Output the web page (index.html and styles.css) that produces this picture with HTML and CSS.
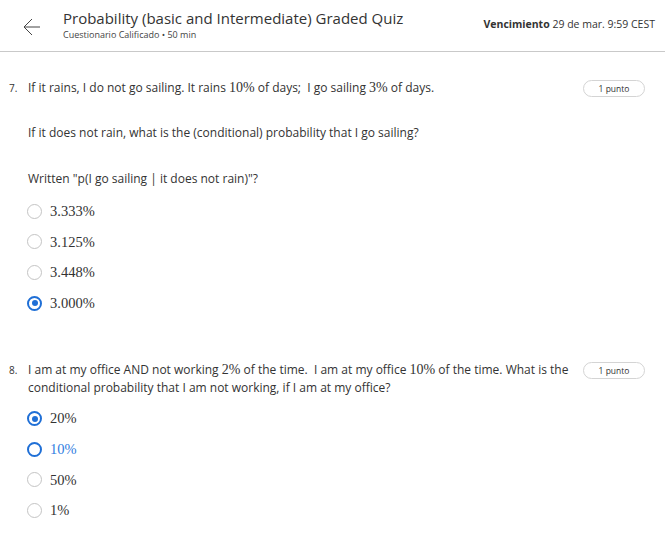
FILE: index.html
```html
<!DOCTYPE html>
<html>
<head>
<meta charset="utf-8">
<link rel="stylesheet" href="styles.css">
</head>
<body>
<header class="top">
  <div class="back">
    <svg width="18" height="18" viewBox="0 0 18 18"><path d="M17 9H1M9 1L1 9l8 8" fill="none" stroke="#444" stroke-width="1"/></svg>
  </div>
  <div class="titles">
    <div class="title">Probability (basic and Intermediate) Graded Quiz</div>
    <div class="sub">Cuestionario Calificado • 50 min</div>
  </div>
  <div class="due"><b>Vencimiento</b> 29 de mar. 9:59 CEST</div>
</header>

<section class="q q7">
  <div class="qrow">
    <div class="qnum">7.</div>
    <div class="qbody">
      <p class="line">If it rains, I do not go sailing. It rains <span class="m">10%</span> of days;&nbsp; I go sailing <span class="m">3%</span> of days.</p>
      <p class="line p2">If it does not rain, what is the (conditional) probability that I go sailing?</p>
      <p class="line p3">Written "p(I go sailing | it does not rain)"?</p>
    </div>
    <div class="badge">1 punto</div>
  </div>
  <ul class="opts">
    <li class="opt"><span class="radio"></span><span class="m">3.333%</span></li>
    <li class="opt"><span class="radio"></span><span class="m">3.125%</span></li>
    <li class="opt"><span class="radio"></span><span class="m">3.448%</span></li>
    <li class="opt"><span class="radio checked"></span><span class="m">3.000%</span></li>
  </ul>
</section>

<section class="q q8">
  <div class="qrow">
    <div class="qnum">8.</div>
    <div class="qbody">
      <p class="line">I am at my office AND not working <span class="m">2%</span> of the time.&nbsp; I am at my office <span class="m">10%</span> of the time. What is the conditional probability that I am not working, if I am at my office?</p>
    </div>
    <div class="badge">1 punto</div>
  </div>
  <ul class="opts">
    <li class="opt"><span class="radio checked"></span><span class="m">20%</span></li>
    <li class="opt focus"><span class="radio ring"></span><span class="m">10%</span></li>
    <li class="opt"><span class="radio"></span><span class="m">50%</span></li>
    <li class="opt"><span class="radio"></span><span class="m">1%</span></li>
  </ul>
</section>
</body>
</html>
```
FILE: styles.css
```css
html, body {
  margin: 0;
  padding: 0;
  background: #fff;
}
body {
  font-family: "Open Sans", "Noto Sans", sans-serif;
  color: #333;
  width: 665px;
}
.top {
  height: 52px;
  box-sizing: border-box;
  border-bottom: 1px solid #c9c9c9;
  display: flex;
  align-items: flex-start;
  padding: 0 10px 0 23px;
}
.back {
  width: 18px;
  height: 18px;
  margin-top: 18px;
  margin-right: 22px;
}
.back svg { display: block; }
.titles {
  flex: 1;
  padding-top: 8px;
}
.title {
  font-size: 15px;
  line-height: 21px;
  color: #333;
}
.sub {
  font-size: 9px;
  line-height: 12px;
  color: #444;
}
.due {
  font-size: 10.5px;
  color: #333;
  margin-top: 17px;
}
.due b { font-weight: 700; }

.q { padding: 0; }
.q7 { margin-top: 27px; }
.q8 { margin-top: 43px; }
.qrow {
  display: flex;
  align-items: flex-start;
  padding: 0 20px 0 9px;
}
.qnum {
  width: 19px;
  font-size: 10px;
  line-height: 18px;
  color: #333;
}
.qbody { flex: 1; }
.line {
  margin: 0;
  font-size: 12px;
  line-height: 18px;
  color: #333;
}
.p2 { margin-top: 27px; }
.p3 { margin-top: 28px; }
.m {
  font-family: "Liberation Serif", "DejaVu Serif", serif;
  font-size: 14px;
  line-height: 1;
}
.badge {
  flex: none;
  margin-left: 12px;
  margin-top: 1px;
  width: 62px;
  height: 17px;
  box-sizing: border-box;
  border: 1px solid #d4d4d4;
  border-radius: 9px;
  font-size: 8.5px;
  line-height: 15px;
  text-align: center;
  color: #333;
}
.opts {
  list-style: none;
  margin: 8px 0 0 27px;
  padding: 0;
}
.q8 .opts { margin-top: 6px; }
.opt {
  display: flex;
  align-items: center;
  height: 30.6px;
}
.opt .m { font-size: 14.5px; color: #333; }
.radio {
  width: 15px;
  height: 15px;
  box-sizing: border-box;
  border: 1.5px solid #c4c4c4;
  border-radius: 50%;
  margin-right: 8px;
  position: relative;
}
.radio.checked {
  border: 2px solid #1f6fd6;
}
.radio.checked::after {
  content: "";
  position: absolute;
  left: 2.5px;
  top: 2.5px;
  width: 6px;
  height: 6px;
  border-radius: 50%;
  background: #1f6fd6;
}
.radio.ring { border: 2px solid #1f6fd6; }
.focus .m { color: #2f7de1; }
```
